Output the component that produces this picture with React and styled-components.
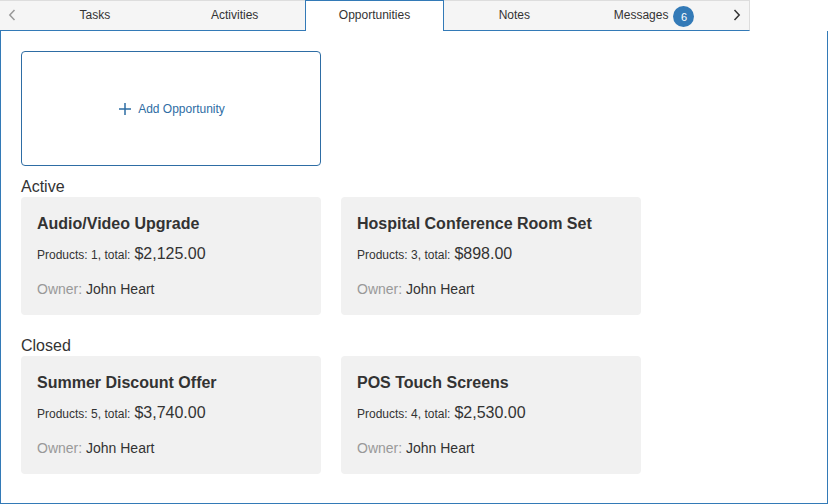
import React from "react";
import styled, { createGlobalStyle } from "styled-components";

const Global = createGlobalStyle`
  html, body { margin: 0; padding: 0; background: #fff; }
  body { font-family: "Liberation Sans", Arial, sans-serif; color: #333; }
  * { box-sizing: border-box; }
`;

const Page = styled.div`
  width: 828px;
  height: 504px;
  display: flex;
  flex-direction: column;
`;

const TabBar = styled.div`
  width: 750px;
  height: 31px;
  display: flex;
  background: #f5f5f5;
  border-top: 1px solid #ddd;
  border-right: 1px solid #ddd;
  border-bottom: 1px solid #337ab7;
  flex: none;
`;

const Arrow = styled.div`
  width: 25px;
  display: flex;
  align-items: center;
  justify-content: center;
  padding-bottom: 1px;
  color: ${(p) => (p.$disabled ? "#999" : "#333")};
`;

const Tab = styled.div`
  width: 140px;
  height: ${(p) => (p.$active ? "31px" : "29px")};
  margin-top: ${(p) => (p.$active ? "-1px" : "0")};
  display: flex;
  align-items: center;
  justify-content: center;
  gap: 5px;
  font-size: 12px;
  color: #333;
  background: ${(p) => (p.$active ? "#fff" : "transparent")};
  border: 1px solid ${(p) => (p.$active ? "#337ab7" : "transparent")};
  border-bottom: none;
  padding-bottom: ${(p) => (p.$active ? "3px" : "2px")};
  position: relative;
  z-index: 1;
`;

const Badge = styled.span`
  width: 21px;
  height: 21px;
  border-radius: 50%;
  background: #337ab7;
  color: #fff;
  font-size: 11px;
  display: inline-flex;
  align-items: center;
  justify-content: center;
  padding-top: 2px;
  margin-top: 2px;
`;

const Panel = styled.div`
  flex: 1;
  border: 1px solid #337ab7;
  border-top: none;
  padding: 20px 20px 0 20px;
  display: flex;
  flex-direction: column;
`;

const AddBox = styled.div`
  width: 300px;
  height: 115px;
  border: 1px solid #2e6da4;
  border-radius: 4px;
  display: flex;
  align-items: center;
  justify-content: center;
  gap: 7px;
  color: #2e6da4;
  font-size: 12px;
  padding-left: 2px;
`;

const SectionTitle = styled.div`
  font-size: 16px;
  line-height: 20px;
  color: #333;
  margin-top: ${(p) => p.$top}px;
  margin-bottom: 0;
`;

const CardRow = styled.div`
  display: flex;
  gap: 20px;
`;

const Card = styled.div`
  width: 300px;
  height: 118px;
  background: #f1f1f1;
  border-radius: 4px;
  padding: 17px 16px 16px 16px;
  display: flex;
  flex-direction: column;
`;

const CardTitle = styled.div`
  font-size: 16px;
  font-weight: bold;
  line-height: 20px;
  color: #333;
  margin-bottom: 9px;
`;

const Products = styled.div`
  font-size: 12px;
  line-height: 22px;
  color: #333;
  margin-bottom: 13px;
  display: flex;
  align-items: baseline;
  gap: 4px;
`;

const Amount = styled.span`
  font-size: 16px;
`;

const Owner = styled.div`
  font-size: 14px;
  line-height: 20px;
  color: #333;
`;

const OwnerLabel = styled.span`
  color: #999;
`;

const Chevron = ({ dir }) => (
  <svg width="8" height="12" viewBox="0 0 8 12" fill="none">
    <path
      d={dir === "left" ? "M6.5 1 L1.8 6 L6.5 11" : "M1.5 1 L6.2 6 L1.5 11"}
      stroke="currentColor"
      strokeWidth="1.5"
    />
  </svg>
);

const Plus = () => (
  <svg width="12" height="12" viewBox="0 0 12 12">
    <path d="M6 0 V12 M0 6 H12" stroke="currentColor" strokeWidth="1.5" />
  </svg>
);

const active = [
  { title: "Audio/Video Upgrade", products: 1, total: "$2,125.00" },
  { title: "Hospital Conference Room Set", products: 3, total: "$898.00" },
];
const closed = [
  { title: "Summer Discount Offer", products: 5, total: "$3,740.00" },
  { title: "POS Touch Screens", products: 4, total: "$2,530.00" },
];

const OppCard = ({ o }) => (
  <Card>
    <CardTitle>{o.title}</CardTitle>
    <Products>
      <span>Products: {o.products}, total:</span>
      <Amount>{o.total}</Amount>
    </Products>
    <Owner>
      <OwnerLabel>Owner:</OwnerLabel> John Heart
    </Owner>
  </Card>
);

export default function App() {
  return (
    <Page>
      <Global />
      <TabBar>
        <Arrow $disabled>
          <Chevron dir="left" />
        </Arrow>
        <Tab>Tasks</Tab>
        <Tab>Activities</Tab>
        <Tab $active>Opportunities</Tab>
        <Tab>Notes</Tab>
        <Tab>
          Messages <Badge>6</Badge>
        </Tab>
        <Arrow>
          <Chevron dir="right" />
        </Arrow>
      </TabBar>
      <Panel>
        <AddBox>
          <Plus />
          <span>Add Opportunity</span>
        </AddBox>
        <SectionTitle $top={11}>Active</SectionTitle>
        <CardRow>
          {active.map((o) => (
            <OppCard key={o.title} o={o} />
          ))}
        </CardRow>
        <SectionTitle $top={21}>Closed</SectionTitle>
        <CardRow>
          {closed.map((o) => (
            <OppCard key={o.title} o={o} />
          ))}
        </CardRow>
      </Panel>
    </Page>
  );
}
